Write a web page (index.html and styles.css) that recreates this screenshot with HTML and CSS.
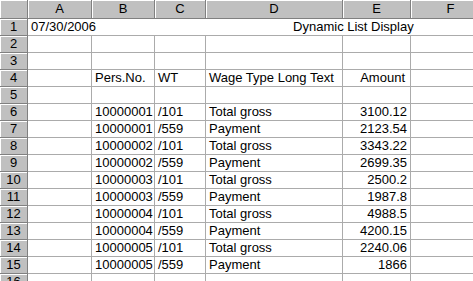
FILE: index.html
```html
<!DOCTYPE html>
<html>
<head>
<meta charset="utf-8">
<link rel="stylesheet" href="styles.css">
</head>
<body>
<div class="sheet">
  <div class="hd corner"></div>
  <div class="hd col">A</div>
  <div class="hd col">B</div>
  <div class="hd col">C</div>
  <div class="hd col">D</div>
  <div class="hd col">E</div>
  <div class="hd col">F</div>

  <div class="hd row">1</div>
  <div class="c title"><span class="date">07/30/2006</span><span class="name">Dynamic List Display</span></div>

  <div class="hd row">2</div><div class="c"></div><div class="c"></div><div class="c"></div><div class="c"></div><div class="c"></div><div class="c"></div>
  <div class="hd row">3</div><div class="c"></div><div class="c"></div><div class="c"></div><div class="c"></div><div class="c"></div><div class="c"></div>
  <div class="hd row">4</div><div class="c"></div><div class="c">Pers.No.</div><div class="c">WT</div><div class="c">Wage Type Long Text</div><div class="c r amt">Amount</div><div class="c"></div>
  <div class="hd row">5</div><div class="c"></div><div class="c"></div><div class="c"></div><div class="c"></div><div class="c"></div><div class="c"></div>
  <div class="hd row">6</div><div class="c"></div><div class="c r">10000001</div><div class="c">/101</div><div class="c">Total gross</div><div class="c r">3100.12</div><div class="c"></div>
  <div class="hd row">7</div><div class="c"></div><div class="c r">10000001</div><div class="c">/559</div><div class="c">Payment</div><div class="c r">2123.54</div><div class="c"></div>
  <div class="hd row">8</div><div class="c"></div><div class="c r">10000002</div><div class="c">/101</div><div class="c">Total gross</div><div class="c r">3343.22</div><div class="c"></div>
  <div class="hd row">9</div><div class="c"></div><div class="c r">10000002</div><div class="c">/559</div><div class="c">Payment</div><div class="c r">2699.35</div><div class="c"></div>
  <div class="hd row">10</div><div class="c"></div><div class="c r">10000003</div><div class="c">/101</div><div class="c">Total gross</div><div class="c r">2500.2</div><div class="c"></div>
  <div class="hd row">11</div><div class="c"></div><div class="c r">10000003</div><div class="c">/559</div><div class="c">Payment</div><div class="c r">1987.8</div><div class="c"></div>
  <div class="hd row">12</div><div class="c"></div><div class="c r">10000004</div><div class="c">/101</div><div class="c">Total gross</div><div class="c r">4988.5</div><div class="c"></div>
  <div class="hd row">13</div><div class="c"></div><div class="c r">10000004</div><div class="c">/559</div><div class="c">Payment</div><div class="c r">4200.15</div><div class="c"></div>
  <div class="hd row">14</div><div class="c"></div><div class="c r">10000005</div><div class="c">/101</div><div class="c">Total gross</div><div class="c r">2240.06</div><div class="c"></div>
  <div class="hd row">15</div><div class="c"></div><div class="c r">10000005</div><div class="c">/559</div><div class="c">Payment</div><div class="c r">1866</div><div class="c"></div>
  <div class="hd row">16</div><div class="c"></div><div class="c"></div><div class="c"></div><div class="c"></div><div class="c"></div><div class="c"></div>
</div>
</body>
</html>
```

FILE: styles.css
```css
html, body {
  margin: 0;
  padding: 0;
  background: #fff;
  overflow: hidden;
  width: 473px;
  height: 281px;
}
.sheet {
  display: grid;
  grid-template-columns: 28px 64px 63px 51px 137px 68px 80px;
  grid-template-rows: 19px;
  grid-auto-rows: 17px;
  font-family: "Liberation Sans", Arial, sans-serif;
  font-size: 13px;
  color: #000;
}
.sheet > div {
  box-sizing: border-box;
  white-space: nowrap;
  overflow: visible;
}
.hd {
  background: #c0c0c0;
  border-right: 1px solid #808080;
  border-bottom: 1px solid #808080;
  box-shadow: inset 1px 1px 0 #fff;
  text-align: center;
  line-height: 16px;
}
.hd.col, .hd.corner {
  line-height: 18px;
}
.c {
  border-right: 1px solid #ababab;
  border-bottom: 1px solid #ababab;
  padding: 0 2px 0 3px;
  line-height: 16px;
}
.r {
  text-align: right;
  padding-right: 3px;
}
.amt {
  padding-right: 5px;
}
.title {
  grid-column: 2 / 8;
  display: flex;
  border-right: none;
}
.title .name {
  margin-left: 197px;
}
```
